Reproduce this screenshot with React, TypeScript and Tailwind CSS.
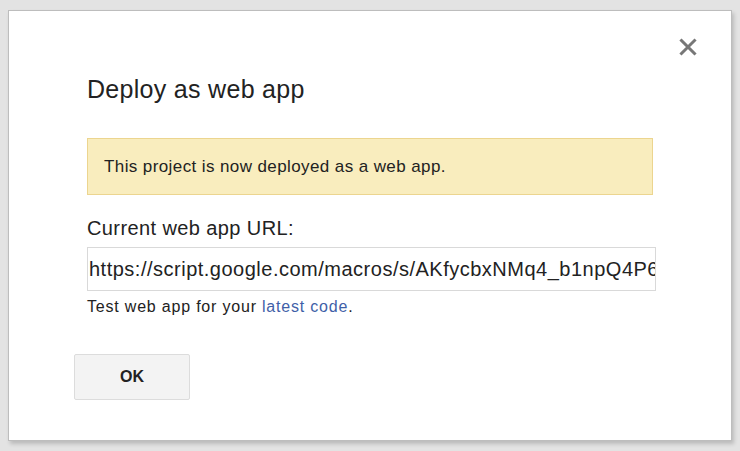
import React from "react";

function CloseIcon() {
    return (
        <svg width="18" height="18" viewBox="0 0 18 18" className="block">
            <path d="M2.5 2.5 L15.5 15.5 M15.5 2.5 L2.5 15.5" stroke="#777" strokeWidth="3" strokeLinecap="square" />
        </svg>
    );
}

export default function App() {
    const url = "https://script.google.com/macros/s/AKfycbxNMq4_b1npQ4P6ZkdhR3lqRz0Lm8pXyVt2WcQe/exec";

    return (
        <main className="w-[740px] h-[451px] bg-[#e3e3e3] pt-[10px] pl-[8px] font-['Liberation_Sans',Arial,sans-serif]">
            <div className="relative w-[724px] h-[431px] bg-white border border-[#bdbdbd] shadow-[2px_3px_4px_rgba(0,0,0,0.18)]">
                {/* Close button */}
                <button type="button" className="absolute right-[34px] top-[27px] p-0">
                    <CloseIcon />
                </button>

                <div className="pl-[78px] pr-[75px] pt-[63px]">
                    <h1 className="text-[25px] leading-[30px] tracking-[0.3px] text-[#222] font-normal">Deploy as web app</h1>

                    {/* Notice */}
                    <div className="mt-[34px] w-[566px] h-[57px] bg-[#f9edbe] border border-[#ecd58f] flex items-center pl-[16px]">
                        <p className="text-[17px] tracking-[0.4px] text-[#222]">This project is now deployed as a web app.</p>
                    </div>

                    <label htmlFor="url" className="block mt-[21px] text-[20px] leading-[24px] tracking-[0.4px] text-[#222]">
                        Current web app URL:
                    </label>
                    <input
                        id="url"
                        readOnly
                        value={url}
                        className="block mt-[7px] w-[569px] h-[44px] border border-[#d9d9d9] pl-[1px] text-[20px] tracking-[0.5px] text-[#222] outline-none"
                    />
                    <p className="mt-[7px] text-[16px] leading-[18px] tracking-[0.8px] text-[#222]">
                        Test web app for your <a href="#" className="text-[#3f5fa8]">latest code</a>.
                    </p>
                </div>

                <div className="pl-[65px] mt-[38px]">
                    <button
                        type="button"
                        className="w-[116px] h-[46px] bg-[#f3f3f3] border border-[#dcdcdc] rounded-[2px] text-[16px] font-bold text-[#222]"
                    >
                        OK
                    </button>
                </div>
            </div>
        </main>
    );
}
